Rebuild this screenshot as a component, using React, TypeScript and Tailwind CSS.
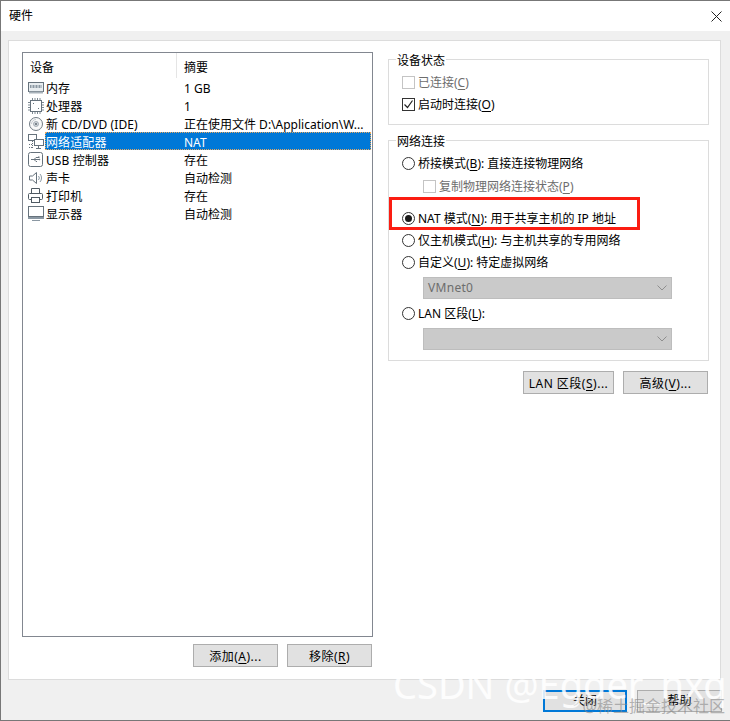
import type { ReactNode } from "react";

const FONT = "font-['Tahoma','Noto_Sans','Noto_Sans_CJK_SC',sans-serif]";

function MemoryIcon() {
  return (
    <svg width="16" height="14" viewBox="0 0 16 14" fill="none">
      <rect x="0.5" y="1.5" width="15" height="9" fill="#e8edf0" stroke="#66727c" />
      <rect x="2" y="4" width="12" height="3" fill="#8b98a3" />
      <path d="M4 4v3M7 4v3M10 4v3M13 4v3" stroke="#e8edf0" />
      <path d="M1 11.5h14" stroke="#a9b3bb" strokeWidth="2" />
    </svg>
  );
}

function CpuIcon() {
  return (
    <svg width="16" height="16" viewBox="0 0 16 16" fill="none">
      <rect x="2.5" y="2.5" width="11" height="11" fill="#fff" stroke="#66727c" />
      <path d="M4.5 0v2M7 0v2M9.5 0v2M12 0v2M4.5 14v2M7 14v2M9.5 14v2M12 14v2M0 4.5h2M0 7h2M0 9.5h2M0 12h2M14 4.5h2M14 7h2M14 9.5h2M14 12h2" stroke="#7d8992" />
      <path d="M5 5h1v1H5zM10 10h1v1h-1z" fill="#66727c" />
    </svg>
  );
}

function DiscIcon() {
  return (
    <svg width="16" height="16" viewBox="0 0 16 16" fill="none">
      <circle cx="8" cy="8" r="6.5" fill="#f7f8f8" stroke="#707b84" />
      <circle cx="8" cy="8" r="2.5" fill="#d3d8dc" stroke="#8b96a0" strokeWidth="0.7" />
      <circle cx="8" cy="8" r="1" fill="#5f6a73" />
      <path d="M3.5 8a4.5 4.5 0 0 1 4.5-4.5" stroke="#c6ccd1" />
    </svg>
  );
}

function NetworkIcon() {
  return (
    <svg width="16" height="16" viewBox="0 0 16 16" fill="none">
      <rect x="0.5" y="0.5" width="8" height="6" fill="#fff" stroke="#66727c" />
      <rect x="6.5" y="5.5" width="9" height="6" fill="#fff" stroke="#66727c" />
      <path d="M10.5 12v2M8 14.5h5" stroke="#66727c" />
      <path d="M1 10.5h3M1 13.5h3M4.5 7v7" stroke="#66727c" strokeDasharray="1 1" />
    </svg>
  );
}

function UsbIcon() {
  return (
    <svg width="15" height="15" viewBox="0 0 15 15" fill="none">
      <rect x="0.5" y="0.5" width="14" height="14" rx="2" fill="#fff" stroke="#66727c" />
      <path d="M3 7.5h8M6 7.5l2-2h2M6 7.5l2 2h1" stroke="#66727c" />
      <rect x="10" y="4.5" width="1.5" height="1.5" fill="#66727c" />
      <path d="M11 6.5l1.5 1-1.5 1z" fill="#66727c" />
    </svg>
  );
}

function SpeakerIcon() {
  return (
    <svg width="16" height="14" viewBox="0 0 16 14" fill="none">
      <path d="M1.5 5v4h3l4 3.5v-11l-4 3.5z" fill="#fff" stroke="#66727c" />
      <path d="M10.5 5a3 3 0 0 1 0 4M12 3a6 6 0 0 1 0 8" stroke="#8b98a3" />
    </svg>
  );
}

function PrinterIcon() {
  return (
    <svg width="15" height="15" viewBox="0 0 15 15" fill="none">
      <path d="M3.5 5V0.5h8V5" fill="#fff" stroke="#4f5a63" />
      <rect x="0.5" y="5.5" width="14" height="6" rx="1" fill="#fff" stroke="#4f5a63" />
      <rect x="3.5" y="9.5" width="8" height="5" fill="#fff" stroke="#4f5a63" />
    </svg>
  );
}

function MonitorIcon() {
  return (
    <svg width="16" height="15" viewBox="0 0 16 15" fill="none">
      <rect x="0.5" y="0.5" width="15" height="10" fill="#fff" stroke="#66727c" />
      <path d="M0 12h16" stroke="#8b98a3" strokeWidth="2" />
      <path d="M4 14.5h8" stroke="#8b98a3" />
    </svg>
  );
}

const devices = [
  { icon: <MemoryIcon />, name: "内存", summary: "1 GB" },
  { icon: <CpuIcon />, name: "处理器", summary: "1" },
  { icon: <DiscIcon />, name: "新 CD/DVD (IDE)", summary: "正在使用文件 D:\\Application\\W..." },
  { icon: <NetworkIcon />, name: "网络适配器", summary: "NAT", selected: true },
  { icon: <UsbIcon />, name: "USB 控制器", summary: "存在" },
  { icon: <SpeakerIcon />, name: "声卡", summary: "自动检测" },
  { icon: <PrinterIcon />, name: "打印机", summary: "存在" },
  { icon: <MonitorIcon />, name: "显示器", summary: "自动检测" },
];

function Key({ children }: { children: ReactNode }) {
  return <span className="underline underline-offset-2">{children}</span>;
}

function Radio({ checked }: { checked?: boolean }) {
  return (
    <span className="w-[13px] h-[13px] rounded-full border border-[#333] bg-white flex items-center justify-center shrink-0">
      {checked && <span className="w-[7px] h-[7px] rounded-full bg-[#1a1a1a]" />}
    </span>
  );
}

function CheckBox({ checked, disabled }: { checked?: boolean; disabled?: boolean }) {
  return (
    <span
      className={`w-[13px] h-[13px] border bg-white flex items-center justify-center shrink-0 ${
        disabled ? "border-[#c4c4c4]" : "border-[#333]"
      }`}
    >
      {checked && (
        <svg width="11" height="11" viewBox="0 0 11 11" fill="none">
          <path d="M1.5 5.5l3 3 5-7" stroke="#222" strokeWidth="1.2" />
        </svg>
      )}
    </span>
  );
}

function Select({ value }: { value?: string }) {
  return (
    <div className="ml-[34px] w-[249px] h-[22px] bg-[#cacaca] border border-[#bdbdbd] flex items-center justify-between pl-[4px] pr-[4px] text-[#6d6d6d] tracking-[0.3px]">
      <span>{value}</span>
      <svg width="10" height="6" viewBox="0 0 10 6" fill="none">
        <path d="M0.5 0.5L5 5l4.5-4.5" stroke="#8e8e8e" />
      </svg>
    </div>
  );
}

function Button({ children, w }: { children: ReactNode; w: string }) {
  return (
    <button className={`${w} h-[23px] pt-[2px] bg-[#e1e1e1] border border-[#adadad] text-[12px] tracking-[0.5px] text-black flex items-center justify-center`}>
      {children}
    </button>
  );
}

function Group({ title, className, children }: { title: string; className: string; children: ReactNode }) {
  return (
    <div className={`relative border border-[#dcdcdc] ${className}`}>
      <span className="absolute left-[7px] top-[-7px] bg-white px-px leading-[16px]">{title}</span>
      {children}
    </div>
  );
}

function Option({ control, className, children }: { control: ReactNode; className?: string; children: ReactNode }) {
  return (
    <div className={`flex items-center gap-[3px] h-[20px] ${className ?? ""}`}>
      {control}
      <span className="pt-[2px]">{children}</span>
    </div>
  );
}

export default function App() {
  return (
    <div className={`${FONT} relative w-[730px] h-[721px] overflow-hidden bg-[#f0f0f0] text-[12px] leading-[18px] text-black border-t border-l border-[#777] flex flex-col`}>
      {/* Title bar */}
      <div className="h-[30px] shrink-0 bg-white flex items-center justify-between pl-[8px] pr-[8px]">
        <span>硬件</span>
        <svg width="11" height="11" viewBox="0 0 11 11" fill="none">
          <path d="M0.5 0.5l10 10M10.5 0.5l-10 10" stroke="#222" />
        </svg>
      </div>

      <div className="flex-1 flex flex-col pl-[7px] pr-[9px] pt-[9px] border-b border-[#777]">
        {/* Main panel */}
        <div className="h-[640px] bg-white border border-[#dcdcdc] flex pl-[13px] pt-[11px]">
          {/* Device list */}
          <div className="w-[351px] flex flex-col shrink-0">
            <div className="h-[585px] border border-[#828790] bg-white">
              <div className="h-[25px] flex items-center">
                <div className="w-[154px] pl-[7px] pt-[5px] h-full flex items-center border-r border-[#e5e5e5]">设备</div>
                <div className="pl-[7px] pt-[5px] h-full flex items-center">摘要</div>
              </div>
              <div className="flex flex-col">
                {devices.map((d) => (
                  <div key={d.name} className="h-[18px] flex items-center">
                    <div className="w-[22px] pl-[5px] pt-[1px] shrink-0 flex items-center justify-start">{d.icon}</div>
                    <div
                      className={`flex-1 mr-[1px] h-[18px] flex items-center ${
                        d.selected ? "bg-[#0078d7] text-white outline-1 outline-dotted outline-offset-[-1px] outline-[#e8a860]" : ""
                      }`}
                    >
                      <span className="w-[139px] pl-[1px] pt-[4px] shrink-0 whitespace-nowrap tracking-[0.1px]">{d.name}</span>
                      <span className="pt-[4px] whitespace-nowrap">{d.summary}</span>
                    </div>
                  </div>
                ))}
              </div>
            </div>
            <div className="mt-[7px] flex justify-end gap-[9px] pr-px">
              <Button w="w-[85px]">
                添加(<Key>A</Key>)...
              </Button>
              <Button w="w-[85px]">
                移除(<Key>R</Key>)
              </Button>
            </div>
          </div>

          {/* Right column */}
          <div className="w-[321px] ml-[15px] flex flex-col">
            <Group title="设备状态" className="h-[66px] mt-[7px] pl-[13px] pt-[12px]">
              <Option control={<CheckBox disabled />} className="text-[#6d6d6d]">
                已连接(<Key>C</Key>)
              </Option>
              <Option control={<CheckBox checked />} className="mt-[2px]">
                启动时连接(<Key>O</Key>)
              </Option>
            </Group>

            <Group title="网络连接" className="h-[221px] mt-[15px] pl-[13px] pt-[12px]">
              <Option control={<Radio />}>
                桥接模式(<Key>B</Key>): 直接连接物理网络
              </Option>
              <Option control={<CheckBox disabled />} className="ml-[21px] mt-[3px] text-[#6d6d6d]">
                复制物理网络连接状态(<Key>P</Key>)
              </Option>
              <Option control={<Radio checked />} className="mt-[12px]">
                NAT 模式(<Key>N</Key>): 用于共享主机的 IP 地址
              </Option>
              <Option control={<Radio />} className="mt-[2px]">
                仅主机模式(<Key>H</Key>): 与主机共享的专用网络
              </Option>
              <Option control={<Radio />} className="mt-[2px]">
                自定义(<Key>U</Key>): 特定虚拟网络
              </Option>
              <div className="-ml-[13px] mt-[5px]">
                <Select value="VMnet0" />
              </div>
              <Option control={<Radio />} className="mt-[4px]">
                LAN 区段(<Key>L</Key>):
              </Option>
              <div className="-ml-[13px] mt-[5px]">
                <Select />
              </div>
              {/* Red highlight */}
              <div className="absolute left-0 top-[56px] w-[251px] h-[33px] border-[3px] border-[#fb1d12]" />
            </Group>

            <div className="mt-[10px] flex justify-end gap-[9px] pr-px">
              <Button w="w-[91px]">
                LAN 区段(<Key>S</Key>)...
              </Button>
              <Button w="w-[85px]">
                高级(<Key>V</Key>)...
              </Button>
            </div>
          </div>
        </div>

        {/* Footer */}
        <div className="mt-[10px] flex justify-end gap-[10px] -mr-[1px]">
          <button className="w-[84px] h-[22px] bg-[#e1e1e1] border-2 border-[#0078d7] flex items-center justify-center">关闭</button>
          <button className="w-[85px] h-[22px] bg-[#e1e1e1] border border-[#adadad] flex items-center justify-center">帮助</button>
        </div>
      </div>

      {/* Watermarks */}
      <div className="absolute left-[392px] top-[661px] text-[38px] leading-[44px] text-white/85 whitespace-nowrap font-['Noto_Sans',sans-serif]">
        CSDN @Egder_hxq
      </div>
      <div className="absolute right-[5px] top-[695px] text-[16px] leading-[20px] text-[#888]/60 whitespace-nowrap">
        @稀土掘金技术社区
      </div>
    </div>
  );
}
